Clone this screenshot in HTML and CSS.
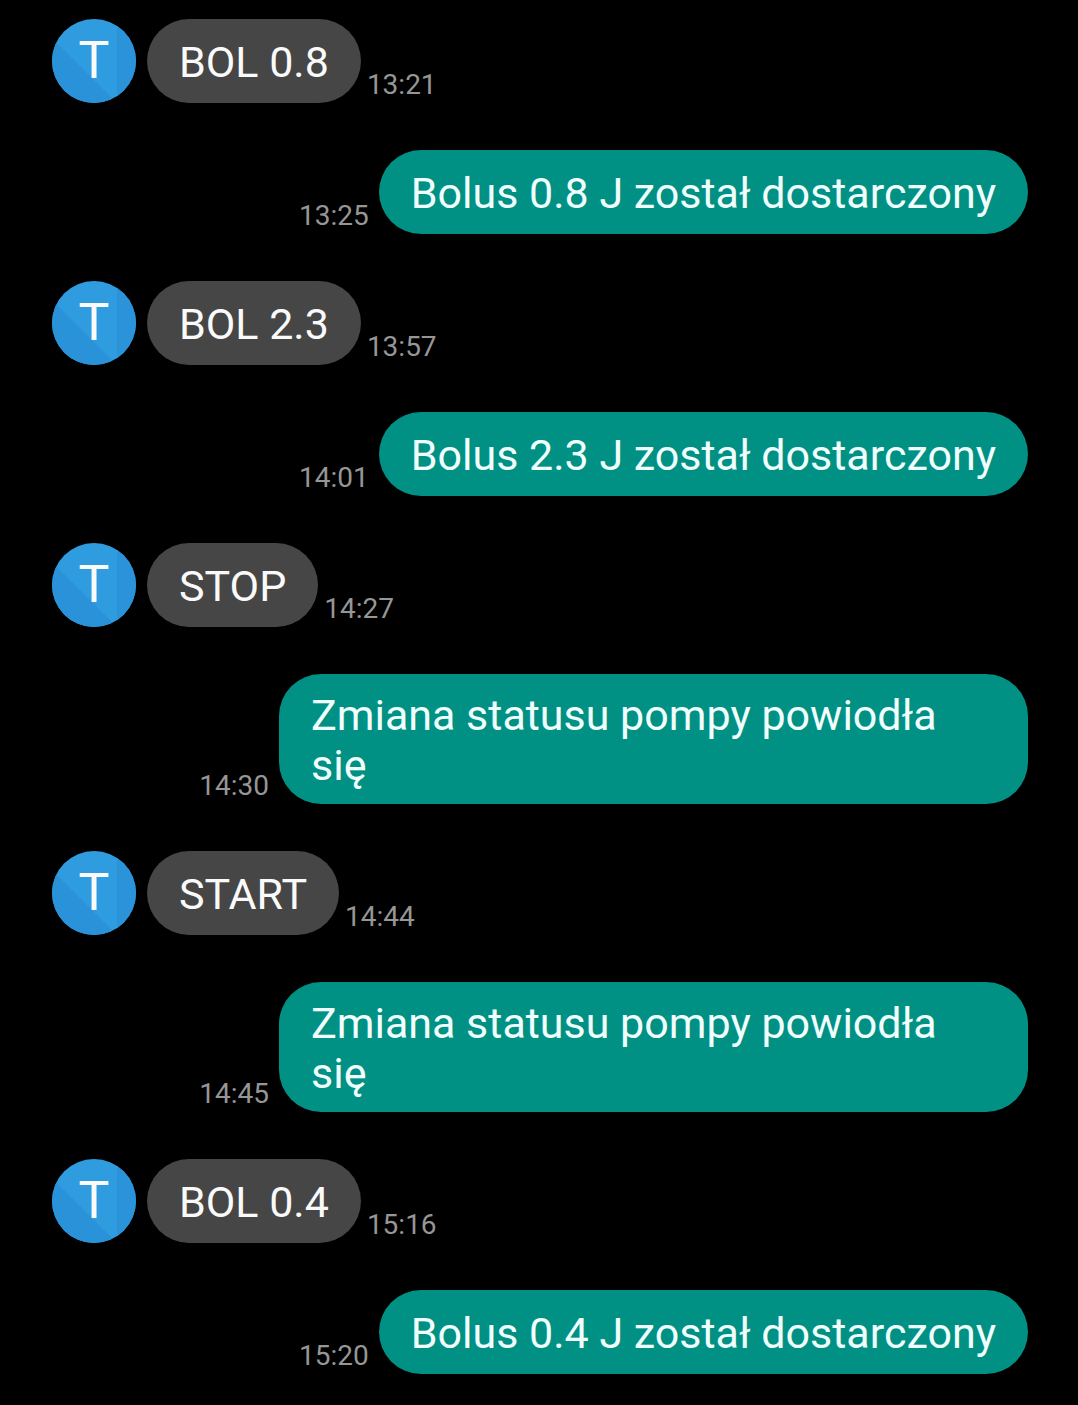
FILE: index.html
```html
<!DOCTYPE html>
<html lang="pl">
<head>
<meta charset="utf-8">
<meta name="viewport" content="width=device-width, initial-scale=1">
<title>Wiadomości</title>
<link rel="stylesheet" href="styles.css">
</head>
<body>
<svg class="defs" aria-hidden="true">
  <symbol id="avatar" viewBox="0 0 84 84">
    <rect width="84" height="84" fill="#2f9ce0"/>
    <path d="M0 19 L65 84 H0Z" fill="#2a92d9"/>
    <path d="M65 0H84V84H65Z" fill="#2a93da"/>
  </symbol>
</svg>
<main class="thread">
  <div class="message received">
    <div class="avatar"><svg><use href="#avatar"/></svg><span>T</span></div>
    <p class="bubble">BOL 0.8</p>
    <time class="time">13:21</time>
  </div>
  <div class="message sent">
    <time class="time">13:25</time>
    <p class="bubble">Bolus 0.8 J został dostarczony</p>
  </div>
  <div class="message received">
    <div class="avatar"><svg><use href="#avatar"/></svg><span>T</span></div>
    <p class="bubble">BOL 2.3</p>
    <time class="time">13:57</time>
  </div>
  <div class="message sent">
    <time class="time">14:01</time>
    <p class="bubble">Bolus 2.3 J został dostarczony</p>
  </div>
  <div class="message received">
    <div class="avatar"><svg><use href="#avatar"/></svg><span>T</span></div>
    <p class="bubble">STOP</p>
    <time class="time">14:27</time>
  </div>
  <div class="message sent">
    <time class="time">14:30</time>
    <p class="bubble">Zmiana statusu pompy powiodła się</p>
  </div>
  <div class="message received">
    <div class="avatar"><svg><use href="#avatar"/></svg><span>T</span></div>
    <p class="bubble">START</p>
    <time class="time">14:44</time>
  </div>
  <div class="message sent">
    <time class="time">14:45</time>
    <p class="bubble">Zmiana statusu pompy powiodła się</p>
  </div>
  <div class="message received">
    <div class="avatar"><svg><use href="#avatar"/></svg><span>T</span></div>
    <p class="bubble">BOL 0.4</p>
    <time class="time">15:16</time>
  </div>
  <div class="message sent">
    <time class="time">15:20</time>
    <p class="bubble">Bolus 0.4 J został dostarczony</p>
  </div>
</main>
</body>
</html>
```
FILE: styles.css
```css
* {
  box-sizing: border-box;
}

body {
  margin: 0;
  background: #000;
  color: #fafafa;
  font-family: Roboto, sans-serif;
}

.defs {
  display: none;
}

.thread {
  display: flex;
  flex-direction: column;
  gap: 47px;
  padding: 19px 50px 32px 52px;
}

.message {
  display: flex;
  align-items: flex-end;
}

.sent {
  justify-content: flex-end;
  gap: 10px;
}

.avatar {
  display: grid;
  flex: none;
  width: 84px;
  height: 84px;
  margin-right: 11px;
  border-radius: 50%;
  overflow: hidden;
}

.avatar svg,
.avatar span {
  grid-area: 1 / 1;
  width: 84px;
  height: 84px;
}

.avatar span {
  font-size: 52px;
  line-height: 84px;
  text-align: center;
}

/* Single-line bubbles stay as tall as the avatar, with the text centred. */
.bubble {
  display: flex;
  align-items: center;
  min-height: 84px;
  max-width: 749px;
  margin: 0;
  padding: 16px 32px 14px;
  border-radius: 42px;
  background: #464646;
  font-size: 43px;
  line-height: 50px;
}

.sent .bubble {
  background: #009184;
  color: #f0fffd;
}

.time {
  flex: none;
  padding-bottom: 2px;
  color: #969696;
  font-size: 28px;
  line-height: 32px;
}

.received .time {
  margin-left: 6px;
}
```
